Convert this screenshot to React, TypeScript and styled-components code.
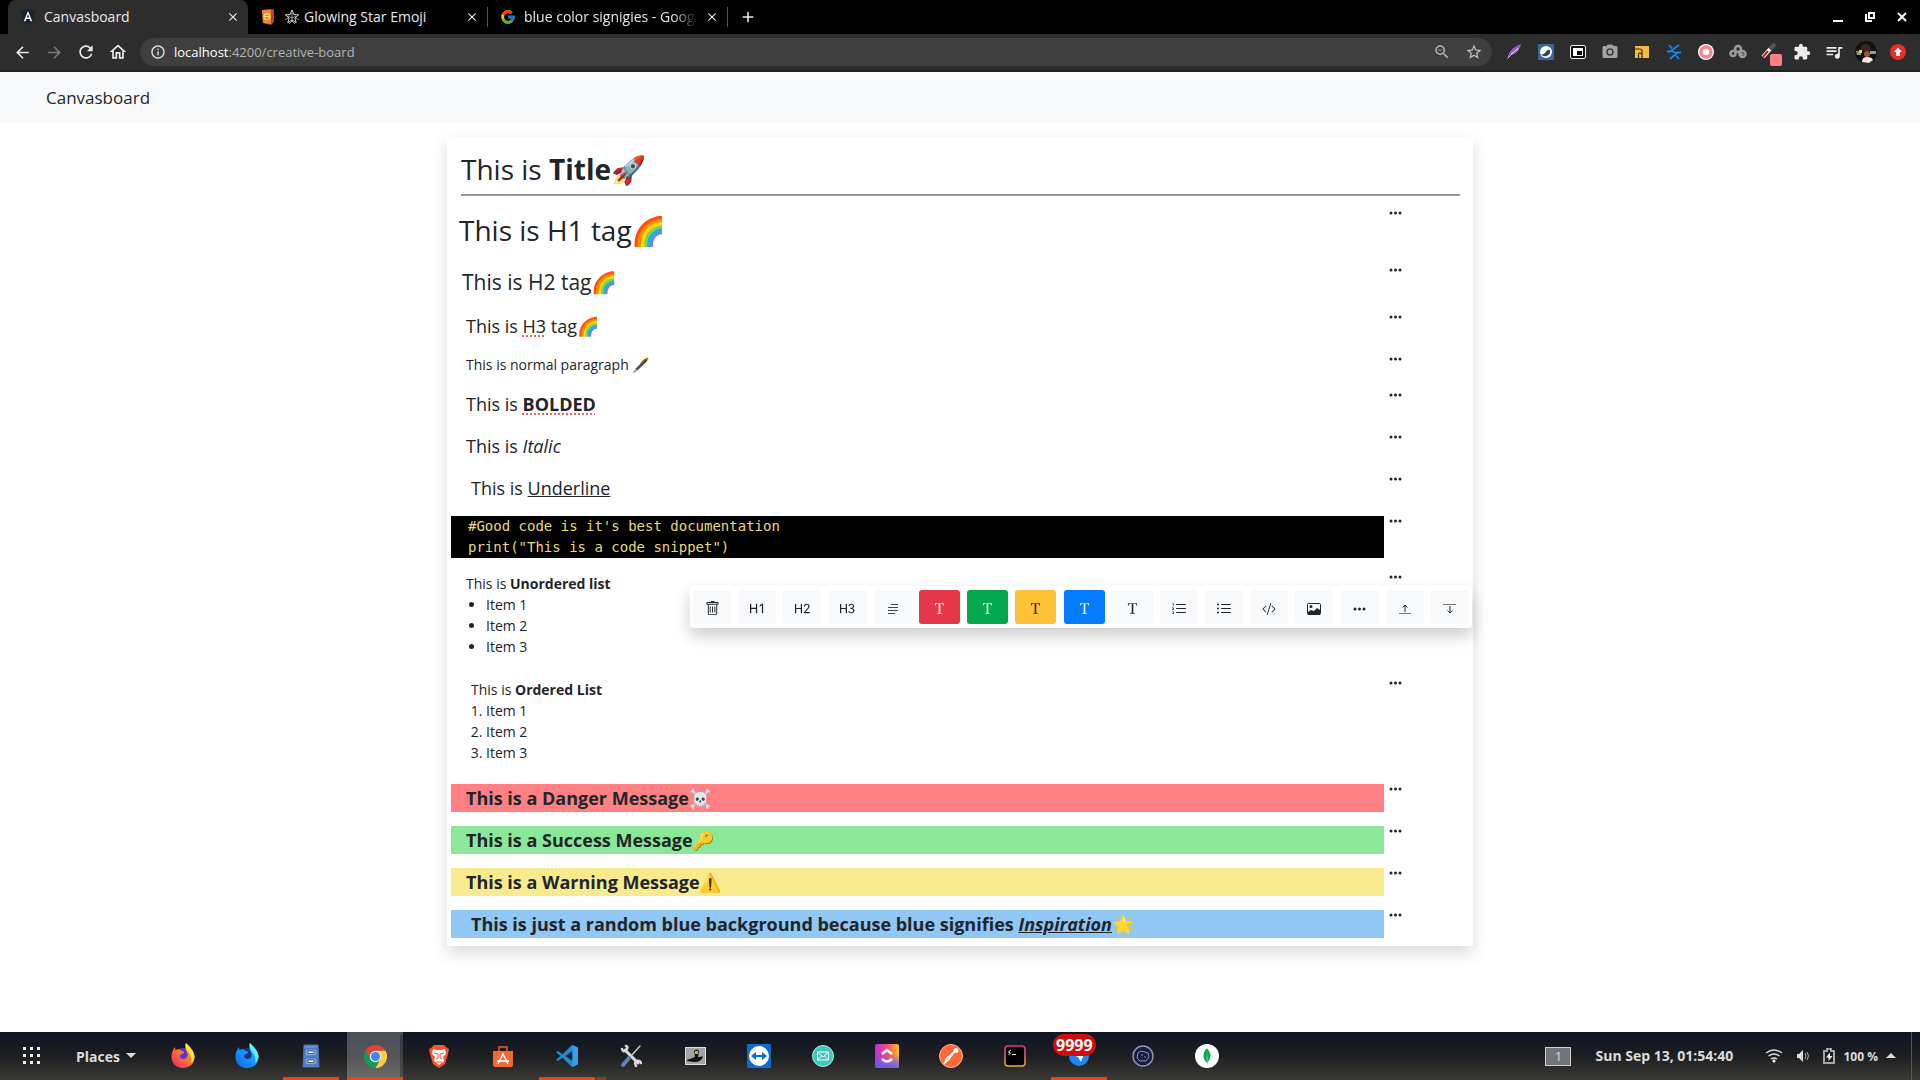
import React from 'react';
import styled, { createGlobalStyle, css } from 'styled-components';
import {
  BsTrash, BsTypeH1, BsTypeH2, BsTypeH3, BsListOl, BsListUl, BsCodeSlash, BsFonts,
} from 'react-icons/bs';
import { FcGoogle } from 'react-icons/fc';
import {
  MdArrowBack, MdArrowForward, MdRefresh, MdInfoOutline, MdClose, MdAdd, MdStarBorder, MdZoomOut,
  MdExtension, MdOutlineHome, MdPhotoCamera, MdQueueMusic,
} from 'react-icons/md';
import { SiMongodb } from 'react-icons/si';

const UI = '"Open Sans", "Noto Sans", "Noto Color Emoji", sans-serif';
const MONO = '"DejaVu Sans Mono", "Liberation Mono", monospace';

const GlobalStyle = createGlobalStyle`
  *, *::before, *::after { box-sizing: border-box; }
  body { margin: 0; background: #fff; color: #212529; font-family: ${UI}; font-size: 14px; }
  button { font: inherit; color: inherit; border: 0; background: none; padding: 0; cursor: pointer; }
  h1, h2, h3, h4, p, ul, ol, pre { margin: 0; padding: 0; }
  svg { display: block; flex: none; }
`;

const Page = styled.div`
  min-height: 100vh;
  display: flex;
  flex-direction: column;
`;

/* ---------- browser window ---------- */

const TabStrip = styled.div`
  display: flex;
  align-items: center;
  height: 34px;
  padding-left: 8px;
  background: #000;
  color: #e8e8e8;
`;

const Tab = styled.div<{ $active?: boolean; $divided?: boolean }>`
  display: flex;
  align-items: center;
  flex: 0 1 240px;
  min-width: 0;
  height: 34px;
  padding: 0 8px 0 12px;
  gap: 8px;
  ${p => p.$active && css`background: #2d2d2d; border-radius: 8px 8px 0 0;`}
  ${p => p.$divided && css`
    height: 20px;
    border-right: 1px solid #555;
  `}
`;

const TabTitle = styled.span<{ $fade?: boolean }>`
  display: flex;
  align-items: center;
  gap: 4px;
  flex: 1;
  min-width: 0;
  overflow: hidden;
  white-space: nowrap;
  line-height: 20px;
  ${p => p.$fade && css`mask-image: linear-gradient(to right, #000 86%, transparent);`}
`;

const IconButton = styled.button<{ $size?: number; $dim?: boolean }>`
  display: grid;
  place-items: center;
  flex: none;
  width: ${p => p.$size ?? 32}px;
  height: ${p => p.$size ?? 32}px;
  color: ${p => (p.$dim ? '#7c7c7c' : '#ececec')};
`;

const NewTab = styled(IconButton)`
  margin-left: 4px;
`;

const WindowControls = styled.div`
  display: flex;
  margin-left: auto;
  padding-right: 2px;
`;

const AddressBar = styled.div`
  display: flex;
  align-items: center;
  height: 38px;
  padding: 0 6px;
  background: #2d2d2d;
  border-bottom: 2px solid #211f20;
`;

const Omnibox = styled.div`
  display: flex;
  align-items: center;
  flex: 1;
  height: 28px;
  margin: 0 6px;
  padding: 0 6px 0 10px;
  gap: 8px;
  border-radius: 14px;
  background: #3f3f3f;
  color: #b4b4b4;
`;

const Address = styled.div`
  flex: 1;
  font-size: 13px;
  line-height: 20px;
  outline: none;
  b { font-weight: 400; color: #fff; }
`;

/* ---------- application ---------- */

const Navbar = styled.header`
  display: flex;
  align-items: center;
  height: 50px;
  padding: 2px 46px 0;
  background: #f8f9fb;
`;

const Brand = styled.a`
  color: #212529;
  font-size: 17px;
  line-height: 26px;
  text-decoration: none;
`;

const Main = styled.main`
  flex: 1;
  padding: 15px 16px;
`;

const Board = styled.section`
  max-width: 1026px;
  margin: 0 auto;
  padding-bottom: 8px;
  background: #fff;
  box-shadow: 0 7px 15px rgba(0, 0, 0, 0.15);
`;

const BoardTitle = styled.h1`
  margin: 0 13px 12px 14px;
  padding: 11px 0 4px;
  border-bottom: 2px solid #979797;
  font-size: 28px;
  font-weight: 400;
  line-height: 42px;
`;

const Blocks = styled.div`
  display: flex;
  flex-direction: column;
  gap: 14px;
  padding-left: 4px;
`;

const BlockRow = styled.div`
  position: relative;
  display: grid;
  grid-template-columns: minmax(0, 1fr) 89px;
  align-items: start;
`;

const RowMenu = styled.button`
  justify-self: start;
  padding: 0 5px;
  height: 10px;
`;

type Tone = 'danger' | 'success' | 'warning' | 'info';
const tones: Record<Tone, string> = {
  danger: '#ff8083', success: '#8ae898', warning: '#f8eb8e', info: '#90c7f5',
};

const H1 = styled.h1`
  padding: 2px 0 0 8px;
  font-size: 28px;
  font-weight: 400;
  line-height: 41px;
`;

const H2 = styled.h2`
  padding: 2px 0 0 11px;
  font-size: 21px;
  font-weight: 400;
  line-height: 31px;
`;

const H3 = styled.h3<{ $indent?: boolean; $tone?: Tone }>`
  padding-left: ${p => (p.$indent ? 20 : 15)}px;
  font-size: 18px;
  font-weight: ${p => (p.$tone ? 700 : 400)};
  line-height: 28px;
  white-space: nowrap;
  background: ${p => (p.$tone ? tones[p.$tone] : 'none')};
`;

const Paragraph = styled.p`
  padding-left: 15px;
  line-height: 22px;
`;

const Misspelt = styled.span`
  text-decoration: underline dotted #f4606e 2px;
  text-decoration-skip-ink: none;
  text-underline-offset: 2px;
`;

const Code = styled.pre`
  padding-left: 17px;
  background: #000;
  color: #e6db74;
  font-family: ${MONO};
  font-size: 14px;
  line-height: 21px;
`;

const ListBlock = styled.div<{ $indent?: boolean }>`
  padding: 1px 0 7px;
  line-height: 21px;
  p { padding-left: ${p => (p.$indent ? 20 : 15)}px; }
  ul, ol { padding-left: 35px; }
`;

/* ---------- floating block toolbar ---------- */

const Toolbar = styled.div`
  position: absolute;
  z-index: 1;
  top: 14px;
  right: 1px;
  display: flex;
  justify-content: space-between;
  width: 782px;
  padding: 4px 3px;
  border-radius: 4px;
  background: #fff;
  box-shadow: 0 8px 16px rgba(0, 0, 0, 0.2);
`;

type Fill = 'red' | 'green' | 'amber' | 'blue';
const fills: Record<Fill, string> = {
  red: '#e5364a', green: '#04a84f', amber: '#ffc135', blue: '#047cff',
};

const Tool = styled.button<{ $fill?: Fill; $wide?: boolean }>`
  display: grid;
  place-items: center;
  width: ${p => (p.$wide ? 41 : 38)}px;
  height: 34px;
  padding-top: 3px;
  border-radius: 3px;
  background: ${p => (p.$fill ? fills[p.$fill] : '#f8f9fb')};
  color: ${p => (p.$fill && p.$fill !== 'amber' ? '#fff' : '#212529')};
`;

/* ---------- desktop panel ---------- */

const Panel = styled.footer`
  display: flex;
  align-items: center;
  height: 48px;
  padding-right: 8px;
  background: linear-gradient(#101523, #1d1e22 50%, #3b3a37);
  color: #dcdcdc;
  font-weight: 700;
`;

const AppsButton = styled.button`
  padding: 0 22px;
`;

const PlacesButton = styled.button`
  display: flex;
  align-items: center;
  gap: 6px;
  width: 74px;
  margin: 0 5px 0 12px;
`;

const Launchers = styled.nav`
  display: flex;
  height: 48px;
  gap: 8px;
`;

const Launcher = styled.button<{ $running?: boolean; $focused?: boolean; $stacked?: boolean }>`
  position: relative;
  display: grid;
  place-items: center;
  width: 56px;
  height: 48px;
  border-bottom: 3px solid ${p => (p.$running ? '#e24b14' : 'transparent')};
  border-top: 3px solid transparent;
  background: ${p => (p.$focused ? 'rgba(255, 255, 255, 0.25)' : 'none')};
  ${p => p.$focused && css`box-shadow: inset -3px 0 0 rgba(0, 0, 0, 0.25);`}
  ${p => p.$stacked && css`
    &::after {
      content: '';
      position: absolute;
      left: 100%;
      bottom: -3px;
      width: 11px;
      height: 3px;
      border-left: 1px solid #3b3a37;
      background: #8a3c22;
    }
  `}
`;

const Badge = styled.span`
  position: absolute;
  top: -1px;
  left: 2px;
  padding: 0 3px;
  border-radius: 11px;
  background: #d00c0c;
  color: #fff;
  font-size: 16px;
  line-height: 22px;
`;

const Workspace = styled.button`
  width: 26px;
  height: 19px;
  margin-left: auto;
  border: 1px solid #cfcfcf;
  background: #72747a;
  font-size: 13px;
  font-weight: 400;
  line-height: 16px;
`;

const Clock = styled.time`
  width: 145px;
  margin-left: 24px;
  line-height: 18px;
`;

const Tray = styled.div`
  display: flex;
  align-items: center;
  gap: 13px;
  height: 48px;
  padding: 0 15px 0 25px;
  border-right: 1px solid #55555a;
`;

const Power = styled.div`
  display: flex;
  align-items: center;
  gap: 8px;
  font-size: 12px;
`;

/* ---------- drawings ---------- */

const AngularMark = () => (
  <svg width="16" height="16" viewBox="0 0 16 16">
    <path d="M8 0l7 2.6-1 9.4-6 4-6-4L1 2.600z" fill="#1b2230" />
    <path d="M8 2L3.800 12.300h1.700l.8-2.200h3.400l.8 2.200h1.700zM8 5.200l1.200 3.300H6.800z" fill="#fff" />
  </svg>
);
const EmojiBook = () => (
  <svg width="16" height="16" viewBox="0 0 16 16">
    <path d="M2 1l11-1 1 1v12l-3 3-8-2z" fill="#b8441c" />
    <path d="M2 1l9-.5v14.500l-8-1z" fill="#f58232" />
    <circle cx="7" cy="7.500" r="3.500" fill="#ffd75a" />
    <path d="M5.500 8.500q1.500 2 3 0M6 6v1M8 6v1" stroke="#8b4a10" fill="none" />
  </svg>
);
const StarGlyph = () => (
  <svg width="16" height="16" viewBox="0 0 16 16" fill="none" stroke="#ddd">
    <path d="M8 1l1.800 4.600 4.900.3-3.800 3.100 1.300 4.800L8 11.100l-4.200 2.700 1.300-4.800L1.300 5.900l4.900-.3z" />
    <path d="M8 4v7M4 7l4 2 4-2M5 15l3-3 3 3M1 11l3-2M15 11l-3-2" strokeWidth=".7" />
  </svg>
);
const Minimise = () => (
  <svg width="12" height="12"><path d="M1 10h10" stroke="#fff" strokeWidth="2" /></svg>
);
const Restore = () => (
  <svg width="12" height="12" fill="none" stroke="#fff" strokeWidth="2">
    <path d="M5 2h5v5H5zM2 3v7h6" />
  </svg>
);
const Cross = () => (
  <svg width="12" height="12"><path d="M2 2l8 8M10 2l-8 8" stroke="#fff" strokeWidth="2" /></svg>
);
const Feather = () => (
  <svg width="16" height="16" viewBox="0 0 16 16">
    <path d="M1 16C2 9 5 4 15 0c-1 6-5 11-11 11z" fill="#9a5bbf" />
    <path d="M2 14L12 4M5 10l7-5" stroke="#dcb8ee" />
  </svg>
);
const Planet = () => (
  <svg width="16" height="16" viewBox="0 0 16 16">
    <rect width="16" height="16" fill="#3c659a" />
    <circle cx="8" cy="8" r="6" fill="#fff" />
    <path d="M3 10c1 0 2 1 4-1s2-4 5-3a5 5 0 01-9 4z" fill="#27466f" />
  </svg>
);
const PipIcon = () => (
  <svg width="16" height="16" viewBox="0 0 16 16">
    <rect x=".5" y="1.500" width="15" height="13" rx="1.500" fill="#111" stroke="#eee" />
    <rect x="3" y="4" width="10" height="8" fill="#fff" />
    <rect x="7" y="7" width="5" height="4" fill="#000" />
  </svg>
);
const CastBox = () => (
  <svg width="16" height="16" viewBox="0 0 16 16">
    <rect x="1" y="2" width="14" height="12" fill="#f7bb42" />
    <path d="M1 5h5q2 0 2 2v7M4.500 14v-4q1-2 3 0" stroke="#3a2a10" fill="none" strokeWidth="1.200" />
  </svg>
);
const BlueBolts = () => (
  <svg width="16" height="16" viewBox="0 0 16 16" fill="none" stroke="#1389ee" strokeWidth="1.800">
    <path d="M3 1l3 3.500M13 1L5 7l6 2-7 6M1 7.500h4M11 8.500h4M10 11.500l3 3.500" />
  </svg>
);
const Ring = () => (
  <svg width="16" height="16" viewBox="0 0 16 16">
    <circle cx="8" cy="8" r="8" fill="#fff" />
    <circle cx="8" cy="8" r="5" fill="none" stroke="#f5838a" strokeWidth="3.500" />
  </svg>
);
const Gears = () => (
  <svg width="18" height="16" viewBox="0 0 18 16" fill="none" stroke="#9a9a9a" strokeWidth="2.500">
    <circle cx="9" cy="5" r="3" /><circle cx="4" cy="9.500" r="2.500" /><circle cx="13.500" cy="10" r="3" />
    <path d="M10 8l4 3" />
  </svg>
);
const Dropper = () => (
  <svg width="24" height="28" viewBox="0 0 24 28">
    <path d="M5 19l7-8" stroke="#e8e8e8" strokeWidth="4" />
    <path d="M5 19l5-6" stroke="#c22" strokeWidth="2" />
    <path d="M12 11l5-5" stroke="#555" strokeWidth="4" />
    <rect x="12" y="16" width="12" height="12" rx="2" fill="#ff8083" />
  </svg>
);
const Avatar = () => (
  <svg width="22" height="22" viewBox="0 0 22 22">
    <circle cx="11" cy="11" r="11" fill="#15100e" />
    <path d="M6 5q5-4 9 0l1 5H6z" fill="#3a2620" />
    <path d="M1 10h5v4H2z" fill="#78a6b8" /><path d="M4 9h3v3H4z" fill="#e9dd54" /><path d="M2 10h2v2H2z" fill="#e06040" />
    <path d="M15 10h6v3h-6z" fill="#999" />
    <circle cx="12" cy="13" r="3" fill="#96563f" />
    <path d="M7 21q0-5 5-5t6 3l-4 3z" fill="#f2e8e4" />
  </svg>
);
const UpdateDot = () => (
  <svg width="16" height="16" viewBox="0 0 16 16">
    <circle cx="8" cy="8" r="8" fill="#e32f2b" />
    <path d="M8 3.500l4 4.500H9.800v4H6.200V8H4z" fill="#fff" />
  </svg>
);

const Dots = () => (
  <svg width="13" height="10" fill="#212529">
    <circle cx="2" cy="5" r="1.500" /><circle cx="6.500" cy="5" r="1.500" /><circle cx="11" cy="5" r="1.500" />
  </svg>
);
const ParagraphLines = () => (
  <svg width="12" height="12" stroke="#444">
    <path d="M4 1.500h7M1 4.500h10M1 7.500h10M1 10.500h7" />
  </svg>
);
const Picture = () => (
  <svg width="14" height="14" viewBox="0 0 14 14">
    <rect x=".5" y="1.500" width="13" height="11" rx="1" fill="none" stroke="#212529" />
    <circle cx="4" cy="4.500" r="1.500" fill="#212529" />
    <path d="M1 10l3-2 3 1 3-3 3 2v5H1z" fill="#212529" />
  </svg>
);
const InsertAbove = () => (
  <svg width="14" height="14" fill="none" stroke="#212529">
    <path d="M7 10V3M4.500 5.500L7 3l2.500 2.500" /><path d="M1 11.500h12" stroke="#777" />
  </svg>
);
const InsertBelow = () => (
  <svg width="14" height="14" fill="none" stroke="#212529">
    <path d="M7 4v7M4.500 8.500L7 11l2.500-2.500" /><path d="M0 2.500h13" stroke="#777" />
  </svg>
);

const AppGrid = () => (
  <svg width="20" height="20" fill="#eee">
    {[1, 8, 15].map(y => [1, 8, 15].map(x => <rect key={`${x}-${y}`} x={x} y={y} width="3" height="3" />))}
  </svg>
);
const Caret = ({ up }: { up?: boolean }) => (
  <svg width="10" height="6" fill="#dcdcdc"><path d={up ? 'M0 5l5-5 5 5z' : 'M0 0h10L5 5z'} /></svg>
);
const Fox = ({ id, core, colors }: { id: string; core: string; colors: [string, string, string] }) => (
  <svg width="24" height="26" viewBox="0 0 24 26">
    <defs>
      <linearGradient id={id} x1="1" y1="0" x2=".1" y2="1">
        <stop offset="0" stopColor={colors[0]} /><stop offset=".4" stopColor={colors[1]} /><stop offset="1" stopColor={colors[2]} />
      </linearGradient>
    </defs>
    <circle cx="12" cy="13" r="8" fill={core} />
    <path d="M15 0c4 4 8 8 8.500 13.500C24 20 19 25 12 25S0 20 .5 13C.7 9.500 2 6.500 4 4l.5 3.200C6 6 8 6 9.500 7c1 1.500 3.500 1 3.500 2.500S9.500 11 9 12.500c-.3 2 1 3.500 3.500 3.500 3 0 4.500-2.500 4-5C16 8 13 6 15 0z" fill={`url(#${id})`} />
    <path d="M15 0c4 4 8 8 8.500 13.500-.5 3-1.500 5-3 6.500 0-6-.5-8-3-11S14 3 15 0z" fill={colors[0]} />
  </svg>
);
const Cabinet = () => (
  <svg width="18" height="24" viewBox="0 0 18 24">
    <path d="M2 1h14l1 22H1z" fill="#5f8fd8" stroke="#4470b5" />
    <rect x="3" y="5" width="12" height="7" fill="#7ba7e6" stroke="#3c66a8" />
    <rect x="3" y="14" width="12" height="7" fill="#7ba7e6" stroke="#3c66a8" />
    <path d="M6 7h6v2.500H6zM6 16h6v2.500H6z" fill="#f4f1e4" stroke="#333" strokeWidth=".7" />
  </svg>
);
const Chrome = () => (
  <svg width="23" height="23" viewBox="0 0 24 24">
    <path d="M1.600 6a12 12 0 0120.800 0H12L6.800 15z" fill="#db4437" />
    <path d="M1.600 6A12 12 0 0012 24l5.200-9H6.800z" fill="#0f9d58" />
    <path d="M22.400 6A12 12 0 0112 24l5.200-9L12 6z" fill="#ffcd40" />
    <circle cx="12" cy="12" r="6" fill="#f1f1f1" /><circle cx="12" cy="12" r="4.700" fill="#4285f4" />
  </svg>
);
const ShoppingBag = () => (
  <svg width="20" height="22" viewBox="0 0 20 22">
    <path d="M6 7V2h8v5" fill="none" stroke="#c9481b" strokeWidth="2" />
    <path d="M0 6h20v14q0 2-2 2H2q-2 0-2-2z" fill="#ee6a33" />
    <path d="M5 19l5-10 5 10M4 16h12" fill="none" stroke="#fff" strokeWidth="1.500" />
  </svg>
);
const VsCode = () => (
  <svg width="22" height="22" viewBox="0 0 24 24">
    <path d="M17.500 0L24 3v18l-6.500 3L7 14l-4.500 3.500L0 16.300 4.700 12 0 7.700l2.500-1.200L7 10zM18 6.500L10.500 12l7.500 5.500z" fill="#2389ca" fillRule="evenodd" />
    <path d="M18 0l6 3v18l-6 3z" fill="#31a3ee" />
  </svg>
);
const Tools = () => (
  <svg width="22" height="24" viewBox="0 0 22 24" fill="none" strokeLinecap="round">
    <path d="M5 6l13 13" stroke="#ddd" strokeWidth="3" />
    <path d="M2 5q1 4 4 1t0-4M16 22q-2-4 1-5t4 2" stroke="#ddd" strokeWidth="2.500" />
    <path d="M20 2l-9 10" stroke="#ccc" strokeWidth="1.500" /><path d="M9 14l-6 7" stroke="#5a84b8" strokeWidth="4" />
  </svg>
);
const Penguin = () => (
  <svg width="21" height="18" viewBox="0 0 21 18">
    <rect x=".5" y=".5" width="20" height="17" fill="#a4a4a4" stroke="#ddd" />
    <path d="M9 4q3-3 5 0l-1 6q4 0 5-1-1 6-9 6L2 14q0-2 3-2l5-2z" fill="#111" />
    <path d="M10 4h3v3h-3z" fill="#e9a72b" />
  </svg>
);
const Remote = () => (
  <svg width="24" height="24" viewBox="0 0 24 24">
    <rect width="24" height="24" rx="1" fill="#0b6bd0" /><circle cx="12" cy="12" r="10" fill="#fff" />
    <path d="M4 12l5-4v3h6V8l5 4-5 4v-3H9v3z" fill="#0b6bd0" />
  </svg>
);
const MailDisc = () => (
  <svg width="22" height="22" viewBox="0 0 22 22">
    <circle cx="11" cy="11" r="10.500" fill="#3cc9bd" stroke="#b6ebe6" />
    <path d="M5.500 7h11v8h-11zM5.500 7l5.500 5 5.500-5M5.500 15l4-4M16.500 15l-4-4" fill="none" stroke="#fff" />
  </svg>
);
const Chevrons = () => (
  <svg width="24" height="24" viewBox="0 0 24 24">
    <defs>
      <linearGradient id="cu" x1="0" y1="0" x2="1" y2="0">
        <stop offset="0" stopColor="#c02be8" /><stop offset=".5" stopColor="#f54a7a" /><stop offset="1" stopColor="#ffc20e" />
      </linearGradient>
      <linearGradient id="cd" x1="0" y1="0" x2="0" y2="1">
        <stop offset=".4" stopColor="#6a4df5" stopOpacity="0" /><stop offset="1" stopColor="#5f62f5" />
      </linearGradient>
    </defs>
    <rect width="24" height="24" rx="2" fill="url(#cu)" /><rect width="24" height="24" rx="2" fill="url(#cd)" />
    <path d="M7 10l5-4 5 4M7 15q5 5 10 0" fill="none" stroke="#fff" strokeWidth="2.500" />
  </svg>
);
const Courier = () => (
  <svg width="24" height="24" viewBox="0 0 24 24">
    <circle cx="12" cy="12" r="11.500" fill="#fb6a38" stroke="#ffb596" />
    <circle cx="17" cy="6.500" r="2.500" fill="#fff" /><path d="M15 8l-5 7-5 5 3-6z" fill="none" stroke="#fff" strokeWidth="1.500" />
  </svg>
);
const Terminal = () => (
  <svg width="22" height="22" viewBox="0 0 22 22">
    <defs><linearGradient id="tm" x1="0" y1="0" x2="0" y2="1"><stop offset="0" stopColor="#e0339c" /><stop offset="1" stopColor="#f0a64a" /></linearGradient></defs>
    <rect x="1" y="1" width="20" height="20" rx="3" fill="#000" stroke="url(#tm)" strokeWidth="1.500" />
    <path d="M7 5L4.500 7l2 1-2 2M8 9.500h4" fill="none" stroke="#fff" />
  </svg>
);
const PaperPlane = () => (
  <svg width="20" height="20" viewBox="0 0 20 20">
    <circle cx="10" cy="10" r="10" fill="#2187ee" /><path d="M4 9l12-4-4 11-3-5z" fill="#fff" />
  </svg>
);
const Navy = () => (
  <svg width="22" height="22" viewBox="0 0 22 22" fill="none" stroke="#8f95ad">
    <circle cx="11" cy="11" r="10" fill="#171c45" strokeWidth="1.500" />
    <path d="M6 8l3-2 4 1 3 1 1 4-3 4H8l-3-3zM9 10h2M12 12h2" />
  </svg>
);
const Leaf = () => (
  <svg width="24" height="24"><circle cx="12" cy="12" r="12" fill="#fff" /><g transform="translate(4 4)"><SiMongodb size={16} color="#13aa52" /></g></svg>
);
const BraveMark = () => (
  <svg width="22" height="25" viewBox="0 0 22 25">
    <path d="M6 1h10l3 3 2 1-1 5-3 10-6 4-6-4-3-10L1 5l2-1z" fill="#fb542b" />
    <path d="M5 5l4 1h4l4-1 1 5-3 3 1 4-5 4-5-4 1-4-3-3z" fill="#fff" />
    <path d="M6 9l4 1v4l-2 1M16 9l-4 1v4l2 1M8 18h6" fill="none" stroke="#fb542b" />
  </svg>
);
const Wifi = () => (
  <svg width="18" height="14" viewBox="0 0 18 14" fill="none" stroke="#dcdcdc" strokeWidth="1.300">
    <path d="M1 4q8-6 16 0M3.500 7q5.500-4 11 0M6 10q3-2 6 0" /><circle cx="9" cy="12" r="1" fill="#dcdcdc" />
  </svg>
);
const Speaker = () => (
  <svg width="14" height="14" fill="none" stroke="#aaa">
    <path d="M1 5h2l4-4v12L3 9H1z" fill="#dcdcdc" stroke="none" /><path d="M9 4q2 3 0 6M11 3q3 4 0 8" />
  </svg>
);
const Battery = () => (
  <svg width="12" height="16"><path d="M1 3h3V1h4v2h3v12H1z" fill="none" stroke="#a5a5a5" strokeWidth="2" /><path d="M7 4.500L3 9.500h2.500V13l4-5H7z" fill="#eee" /></svg>
);

/* ---------- page ---------- */

const extensions: [string, React.ReactNode][] = [
  ['Feather', <Feather />], ['Planet', <Planet />], ['Picture in picture', <PipIcon />],
  ['Screenshot', <MdPhotoCamera size={18} color="#a3a3a3" />], ['Cast box', <CastBox />], ['Bolts', <BlueBolts />],
  ['Ring', <Ring />], ['Gears', <Gears />], ['Colour picker', <Dropper />],
  ['Extensions', <MdExtension size={18} />], ['Media', <MdQueueMusic size={20} />], ['Profile', <Avatar />],
  ['Update', <UpdateDot />],
];

const tools: { label: string; icon: React.ReactNode; fill?: Fill; wide?: boolean }[] = [
  { label: 'Delete', icon: <BsTrash size={15} /> },
  { label: 'Heading 1', icon: <BsTypeH1 size={15} /> },
  { label: 'Heading 2', icon: <BsTypeH2 size={15} /> },
  { label: 'Heading 3', icon: <BsTypeH3 size={15} /> },
  { label: 'Paragraph', icon: <ParagraphLines /> },
  { label: 'Danger', icon: <BsFonts size={17} />, fill: 'red', wide: true },
  { label: 'Success', icon: <BsFonts size={17} />, fill: 'green', wide: true },
  { label: 'Warning', icon: <BsFonts size={17} />, fill: 'amber', wide: true },
  { label: 'Info', icon: <BsFonts size={17} />, fill: 'blue', wide: true },
  { label: 'Plain', icon: <BsFonts size={17} />, wide: true },
  { label: 'Ordered list', icon: <BsListOl size={16} /> },
  { label: 'Unordered list', icon: <BsListUl size={16} /> },
  { label: 'Code', icon: <BsCodeSlash size={14} /> },
  { label: 'Image', icon: <Picture /> },
  { label: 'More', icon: <Dots /> },
  { label: 'Insert above', icon: <InsertAbove /> },
  { label: 'Insert below', icon: <InsertBelow /> },
];

interface App {
  name: string;
  icon: React.ReactNode;
  running?: boolean;
  focused?: boolean;
  stacked?: boolean;
  badge?: string;
}

const launchers: App[] = [
  { name: 'Firefox', icon: <Fox id="fx" core="#5b36c9" colors={['#ffe14a', '#ff8a1f', '#f0246a']} /> },
  { name: 'Firefox Developer', icon: <Fox id="fd" core="#1c2f80" colors={['#5ff0ff', '#18a4ff', '#0a6bf0']} /> },
  { name: 'Files', icon: <Cabinet />, running: true },
  { name: 'Chrome', icon: <Chrome />, running: true, focused: true },
  { name: 'Brave', icon: <BraveMark /> },
  { name: 'Software', icon: <ShoppingBag /> },
  { name: 'VS Code', icon: <VsCode />, running: true, stacked: true },
  { name: 'Tweaks', icon: <Tools /> },
  { name: 'Penguin', icon: <Penguin /> },
  { name: 'TeamViewer', icon: <Remote /> },
  { name: 'Mail', icon: <MailDisc /> },
  { name: 'ClickUp', icon: <Chevrons /> },
  { name: 'Postman', icon: <Courier /> },
  { name: 'Terminal', icon: <Terminal /> },
  { name: 'Messages', icon: <PaperPlane />, running: true, badge: '9999' },
  { name: 'Insomnia', icon: <Navy /> },
  { name: 'MongoDB', icon: <Leaf /> },
];

const CloseTab = () => <IconButton $size={14} aria-label="Close tab"><MdClose size={14} /></IconButton>;

const Block = ({ children, toolbar }: { children: React.ReactNode; toolbar?: React.ReactNode }) => (
  <BlockRow>
    {children}
    <RowMenu aria-label="Block options"><Dots /></RowMenu>
    {toolbar}
  </BlockRow>
);

const BlockToolbar = () => (
  <Toolbar role="toolbar" aria-label="Block type">
    {tools.map(t => (
      <Tool key={t.label} aria-label={t.label} $fill={t.fill} $wide={t.wide}>{t.icon}</Tool>
    ))}
  </Toolbar>
);

export default function App() {
  return (
    <Page>
      <GlobalStyle />
      <TabStrip>
        <Tab $active><AngularMark /><TabTitle>Canvasboard</TabTitle><CloseTab /></Tab>
        <Tab $divided><EmojiBook /><TabTitle><StarGlyph />Glowing Star Emoji</TabTitle><CloseTab /></Tab>
        <Tab $divided><FcGoogle size={16} /><TabTitle $fade>blue color signigies - Goog</TabTitle><CloseTab /></Tab>
        <NewTab aria-label="New tab"><MdAdd size={18} /></NewTab>
        <WindowControls>
          <IconButton aria-label="Minimise"><Minimise /></IconButton>
          <IconButton aria-label="Restore"><Restore /></IconButton>
          <IconButton aria-label="Close window"><Cross /></IconButton>
        </WindowControls>
      </TabStrip>
      <AddressBar>
        <IconButton aria-label="Back"><MdArrowBack size={19} /></IconButton>
        <IconButton $dim aria-label="Forward"><MdArrowForward size={19} /></IconButton>
        <IconButton aria-label="Reload"><MdRefresh size={20} /></IconButton>
        <IconButton aria-label="Home"><MdOutlineHome size={20} /></IconButton>
        <Omnibox>
          <MdInfoOutline size={16} color="#e4e4e4" />
          <Address role="textbox" aria-label="Address"><b>localhost</b>:4200/creative-board</Address>
          <IconButton $size={24} aria-label="Zoom"><MdZoomOut size={18} color="#b4b4b4" /></IconButton>
          <IconButton $size={24} aria-label="Bookmark"><MdStarBorder size={18} color="#c4c4c4" /></IconButton>
        </Omnibox>
        {extensions.map(([name, icon]) => <IconButton key={name} aria-label={name}>{icon}</IconButton>)}
      </AddressBar>

      <Navbar><Brand href="#">Canvasboard</Brand></Navbar>

      <Main>
        <Board>
          <BoardTitle>This is <strong>Title</strong>🚀</BoardTitle>
          <Blocks>
            <Block><H1>This is H1 tag🌈</H1></Block>
            <Block><H2>This is H2 tag🌈</H2></Block>
            <Block><H3>This is <Misspelt>H3</Misspelt> tag🌈</H3></Block>
            <Block><Paragraph>This is normal paragraph 🖋️</Paragraph></Block>
            <Block><H3>This is <Misspelt><b>BOLDED</b></Misspelt></H3></Block>
            <Block><H3>This is <i>Italic</i></H3></Block>
            <Block><H3 $indent>This is <u>Underline</u></H3></Block>
            <Block><Code>{'#Good code is it\'s best documentation\nprint("This is a code snippet")'}</Code></Block>
            <Block toolbar={<BlockToolbar />}>
              <ListBlock>
                <p>This is <strong>Unordered list</strong></p>
                <ul><li>Item 1</li><li>Item 2</li><li>Item 3</li></ul>
              </ListBlock>
            </Block>
            <Block>
              <ListBlock $indent>
                <p>This is <strong>Ordered List</strong></p>
                <ol><li>Item 1</li><li>Item 2</li><li>Item 3</li></ol>
              </ListBlock>
            </Block>
            <Block><H3 $tone="danger">This is a Danger Message☠️</H3></Block>
            <Block><H3 $tone="success">This is a Success Message🔑</H3></Block>
            <Block><H3 $tone="warning">This is a Warning Message⚠️</H3></Block>
            <Block><H3 $tone="info" $indent>This is just a random blue background because blue signifies <u><i>Inspiration</i></u>🌟</H3></Block>
          </Blocks>
        </Board>
      </Main>

      <Panel>
        <AppsButton aria-label="Show applications"><AppGrid /></AppsButton>
        <PlacesButton>Places <Caret /></PlacesButton>
        <Launchers aria-label="Applications">
          {launchers.map(l => (
            <Launcher key={l.name} aria-label={l.name} $running={l.running} $focused={l.focused} $stacked={l.stacked}>
              {l.icon}
              {l.badge && <Badge>{l.badge}</Badge>}
            </Launcher>
          ))}
        </Launchers>
        <Workspace aria-label="Workspace 1">1</Workspace>
        <Clock>Sun Sep 13, 01:54:40</Clock>
        <Tray>
          <Wifi /><Speaker />
          <Power><Battery />100 %<Caret up /></Power>
        </Tray>
      </Panel>
    </Page>
  );
}
